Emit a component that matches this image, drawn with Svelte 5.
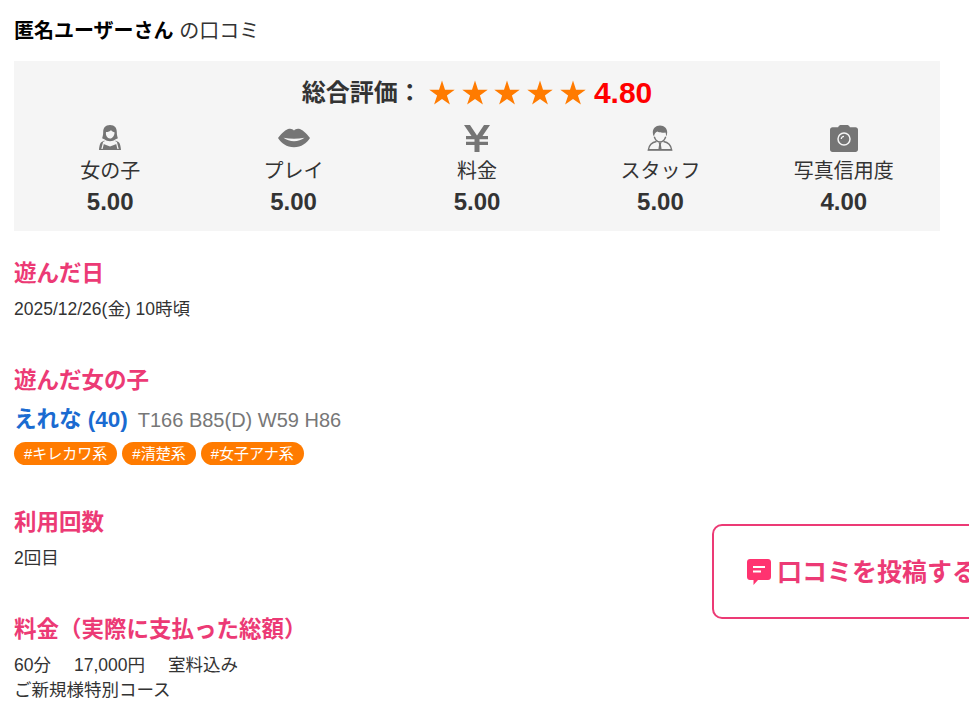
<script>
  const scores = [
    { icon: 'girl', label: '女の子', value: '5.00' },
    { icon: 'lips', label: 'プレイ', value: '5.00' },
    { icon: 'yen', label: '料金', value: '5.00' },
    { icon: 'staff', label: 'スタッフ', value: '5.00' },
    { icon: 'camera', label: '写真信用度', value: '4.00' }
  ];
  const tags = ['#キレカワ系', '#清楚系', '#女子アナ系'];
  const stars = [0, 1, 2, 3, 4];
</script>

<main class="page">
  <h1 class="title"><b>匿名ユーザーさん</b> <span>の口コミ</span></h1>

  <section class="panel">
    <div class="total">
      <span class="total-label">総合評価：</span>
      <span class="stars">
        {#each stars as s}
          <svg viewBox="0 0 26 26" width="26" height="26"><path d="M13 0.5l3 9.2h9.7l-7.8 5.7 3 9.2-7.9-5.7-7.9 5.7 3-9.2-7.8-5.7h9.7z" fill="#ff7b00" /></svg>
        {/each}
      </span>
      <span class="total-num">4.80</span>
    </div>
    <div class="scores">
      {#each scores as item}
        <div class="score">
          <svg class="icon" viewBox="0 0 32 28" width="32" height="28" fill="#757575">
            {#if item.icon === 'girl'}
              <path d="M16 1c-4.800 0-6.800 3.200-6.800 7 0 2.800-.5 4.800-1.100 6.200l2.700 1.400c1.200 1 3 1.600 5.200 1.600s4-.6 5.200-1.600l2.700-1.400c-.6-1.400-1.100-3.400-1.100-6.200C22.800 4.200 20.800 1 16 1z" />
              <path d="M12 8c2.200 0 4-.6 5-2 .8 1.400 2.200 2 3.500 2.200.2 3-1.800 6.300-4.500 6.300s-4.600-3-4-6.500z" fill="#f5f5f5" />
              <path d="M10.500 16.500l-2.500 1.200C6 18.600 5.300 22 5 26h22c-.3-4-1-7.400-3-8.300l-2.500-1.200 1 3.500-6.500 2.500-6.500-2.500z" />
              <path d="M9.200 17.500L7.300 25h1.300l1.700-7zM22.800 17.500l1.900 7.500h-1.300l-1.700-7z" fill="#f5f5f5" />
            {:else if item.icon === 'lips'}
              <path d="M0 14C3.800 9 8 5.200 11.300 4.800c1.900-.3 3.500.5 4.700 1.600 1.200-1.100 2.800-1.900 4.700-1.600C24 5.200 28.200 9 32 14c-3.600 5.200-8.400 9.200-16 9.200S3.600 19.200 0 14z" />
              <path d="M5.500 13.800c3.700.6 7.100 1 10.500 1s6.800-.4 10.500-1c-3.200 2.400-6.500 3.400-10.500 3.400s-7.300-1-10.500-3.400z" fill="#f5f5f5" />
            {:else if item.icon === 'yen'}
              <path d="M3 1h6L16 11.500 23 1h6l-7.500 11H27v3.200h-8.500v2.600H27V21h-8.500v7h-5v-7H5v-3.200h8.500v-2.600H5V12h5.500z" />
            {:else if item.icon === 'staff'}
              <path d="M16 1.500c-4.400 0-7.200 3-7.200 6.900 0 1.600.4 3 1.200 4.200.3-2.600 1.500-4.200 3.300-5 1.800 1.200 5 1.400 8.200 1 .4 1 .6 2.500.5 4 .8-1.200 1.200-2.600 1.200-4.200 0-3.900-2.800-6.900-7.200-6.900z" />
              <path d="M10.300 12.800c1 3.300 3.200 5.200 5.700 5.200s4.700-1.900 5.700-5.200" fill="none" stroke="#757575" stroke-width="1.400" />
              <path d="M12.500 17.500c-4.500.8-7.500 3.500-8.200 8.500h23.400c-.7-5-3.700-7.700-8.200-8.500" fill="none" stroke="#757575" stroke-width="1.400" />
              <path d="M4 25h24v1.200H4zM14.600 18.500h2.800l-.5 2 .8 5.500h-3.400l.8-5.500z" />
            {:else if item.icon === 'camera'}
              <path d="M10.500 2.500C11 1.500 12 1 13 1h6c1 0 2 .5 2.500 1.500l.4.7h5.600c1.400 0 2.500 1.100 2.500 2.500v19.800c0 1.400-1.100 2.500-2.500 2.500h-23c-1.400 0-2.500-1.100-2.500-2.500V5.700c0-1.400 1.100-2.500 2.500-2.500h5.600z" />
              <circle cx="16" cy="15" r="6" fill="none" stroke="#f5f5f5" stroke-width="1.500" />
              <path d="M13.300 15a2.700 2.700 0 0 1 2.700-2.700" fill="none" stroke="#f5f5f5" stroke-width="1.300" />
            {/if}
          </svg>
          <div class="score-label">{item.label}</div>
          <div class="score-value">{item.value}</div>
        </div>
      {/each}
    </div>
  </section>

  <section class="block">
    <h2>遊んだ日</h2>
    <p>2025/12/26(金) 10時頃</p>
  </section>

  <section class="block">
    <h2>遊んだ女の子</h2>
    <div class="girl"><a href="#girl">えれな (40)</a><span class="size">T166 B85(D) W59 H86</span></div>
    <div class="tags">
      {#each tags as tag}
        <span class="tag">{tag}</span>
      {/each}
    </div>
  </section>

  <section class="block">
    <h2>利用回数</h2>
    <p>2回目</p>
  </section>

  <section class="block">
    <h2>料金（実際に支払った総額）</h2>
    <p class="fee"><span>60分</span><span>17,000円</span><span>室料込み</span></p>
    <p>ご新規様特別コース</p>
  </section>
</main>

<a class="post" href="#post">
  <svg viewBox="0 0 26 28" width="26" height="28">
    <path d="M4 1h18c1.700 0 3 1.300 3 3v15c0 1.700-1.300 3-3 3H12l-4.500 5V22H4c-1.700 0-3-1.300-3-3V4c0-1.700 1.300-3 3-3z" fill="#ff3370" />
    <path d="M7 8h12v2H7zM7 12.500h8v2H7z" fill="#fff" />
  </svg>
  <span class="post-text">口コミを投稿する</span>
</a>

<style>
  :global(body) {
    background: #fff;
    overflow: hidden;
  }

  .page {
    width: 926px;
    margin-left: 14px;
    color: #333;
    font-family: "Liberation Sans", "Noto Sans CJK JP", sans-serif;
    font-size: 17.5px;
    line-height: 1.55;
  }

  .title {
    margin: 0;
    padding-top: 16px;
    height: 61px;
    box-sizing: border-box;
    font-size: 20px;
    font-weight: normal;
    line-height: 31px;
  }

  .title b {
    color: #000;
  }

  .panel {
    background: #f5f5f5;
    height: 170px;
    padding: 0 4.500px;
    box-sizing: border-box;
  }

  .total {
    display: flex;
    justify-content: center;
    align-items: center;
    height: 62px;
    padding-top: 2px;
    box-sizing: border-box;
  }

  .total-label {
    font-size: 24px;
    font-weight: bold;
    margin-right: 7px;
  }

  .stars {
    display: flex;
    gap: 6.800px;
    margin-right: 8px;
  }

  .total-num {
    color: #f00;
    font-size: 30px;
    font-weight: bold;
  }

  .scores {
    display: grid;
    grid-template-columns: repeat(5, 1fr);
  }

  .score {
    display: flex;
    flex-direction: column;
    align-items: center;
    margin-top: 1px;
  }

  .score-label {
    font-size: 20px;
    line-height: 30px;
    margin-top: 4px;
  }

  .score-value {
    font-size: 24px;
    font-weight: bold;
    line-height: 32px;
  }

  .block {
    margin-bottom: 42px;
  }

  .block:nth-of-type(3) {
    margin-bottom: 41px;
  }

  .block:last-child {
    margin-bottom: 0;
  }

  .panel + .block {
    margin-top: 26px;
  }

  h2 {
    margin: 0 0 7px;
    color: #ec3a75;
    font-size: 22.5px;
    font-weight: bold;
    line-height: 33px;
  }

  p {
    margin: 0;
    line-height: 25px;
  }

  .fee {
    display: flex;
    gap: 23px;
  }

  .girl {
    display: flex;
    align-items: baseline;
    gap: 10px;
    line-height: 32px;
  }

  .girl a {
    color: #1a6bd1;
    font-size: 22.5px;
    font-weight: bold;
    text-decoration: none;
  }

  .size {
    color: #777;
    font-size: 20px;
  }

  .tags {
    display: flex;
    gap: 5px;
    margin-top: 6px;
  }

  .tag {
    background: #ff7b00;
    color: #fff;
    border-radius: 12px;
    padding: 0 10px;
    font-size: 15px;
    line-height: 23px;
  }

  .post {
    position: fixed;
    left: 712px;
    top: 524px;
    width: 300px;
    height: 95px;
    box-sizing: border-box;
    display: flex;
    align-items: center;
    gap: 5px;
    padding-left: 32px;
    background: #fff;
    border: 2px solid #ec3a75;
    border-radius: 10px;
    color: #ec3a75;
    font-family: "Liberation Sans", "Noto Sans CJK JP", sans-serif;
    font-size: 25px;
    font-weight: bold;
    text-decoration: none;
    white-space: nowrap;
  }

  .post-text {
    margin-bottom: 4px;
  }
</style>
